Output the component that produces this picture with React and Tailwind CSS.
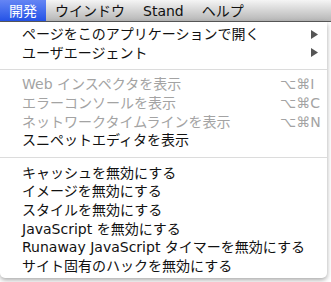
const font = { fontFamily: '"DejaVu Sans", "Noto Sans CJK JP", sans-serif' };

const Arrow = () => (
  <svg width="7" height="9" viewBox="0 0 7 9" className="shrink-0">
    <path d="M0 0 L7 4.5 L0 9 Z" fill="#555" />
  </svg>
);

const Item = ({ label, shortcut, submenu, disabled }) => (
  <div className="flex h-[18.6px] items-center pl-[22px] pr-[9px]">
    <span className={disabled ? 'text-[#a3a3a3]' : 'text-[#111]'}>{label}</span>
    <div className="ml-auto flex items-center">
      {shortcut && (
        <span className="w-[38px] text-left text-[#a3a3a3]">{shortcut}</span>
      )}
      {submenu && <Arrow />}
    </div>
  </div>
);

const Separator = ({ h }) => (
  <div className={h}>
    <div className="h-px bg-[#dcdcdc]" />
  </div>
);

export default function App() {
  const disableItems = [
    'キャッシュを無効にする',
    'イメージを無効にする',
    'スタイルを無効にする',
    'JavaScript を無効にする',
    'Runaway JavaScript タイマーを無効にする',
    'サイト固有のハックを無効にする',
  ];

  return (
    <div className="h-[282px] w-[331px] overflow-hidden bg-white text-[14px] leading-none" style={font}>
      {/* Menu bar */}
      <div className="flex h-[22px] items-stretch border-b border-[#5a5a5a] bg-gradient-to-b from-[#f5f5f5] to-[#b6b6b6] text-[#111]">
        <div className="flex items-center bg-gradient-to-b from-[#6585f4] to-[#2452e6] px-[9px] text-white">開発</div>
        <div className="flex items-center px-[9px]">ウインドウ</div>
        <div className="flex items-center px-[9px]">Stand</div>
        <div className="flex items-center px-[9px]">ヘルプ</div>
      </div>

      {/* Dropdown */}
      <div className="w-[327px] rounded-b-[5px] bg-white pb-[3px] pt-[3px] shadow-[0_2px_5px_rgba(0,0,0,0.35)]">
        <Item label="ページをこのアプリケーションで開く" submenu />
        <Item label="ユーザエージェント" submenu />
        <Separator h="h-[13px] pt-[7px]" />
        <Item label="Web インスペクタを表示" shortcut="⌥⌘I" disabled />
        <Item label="エラーコンソールを表示" shortcut="⌥⌘C" disabled />
        <Item label="ネットワークタイムラインを表示" shortcut="⌥⌘N" disabled />
        <Item label="スニペットエディタを表示" />
        <Separator h="h-[14px] pt-[7px]" />
        {disableItems.map((t) => (
          <Item key={t} label={t} />
        ))}
      </div>
    </div>
  );
}
